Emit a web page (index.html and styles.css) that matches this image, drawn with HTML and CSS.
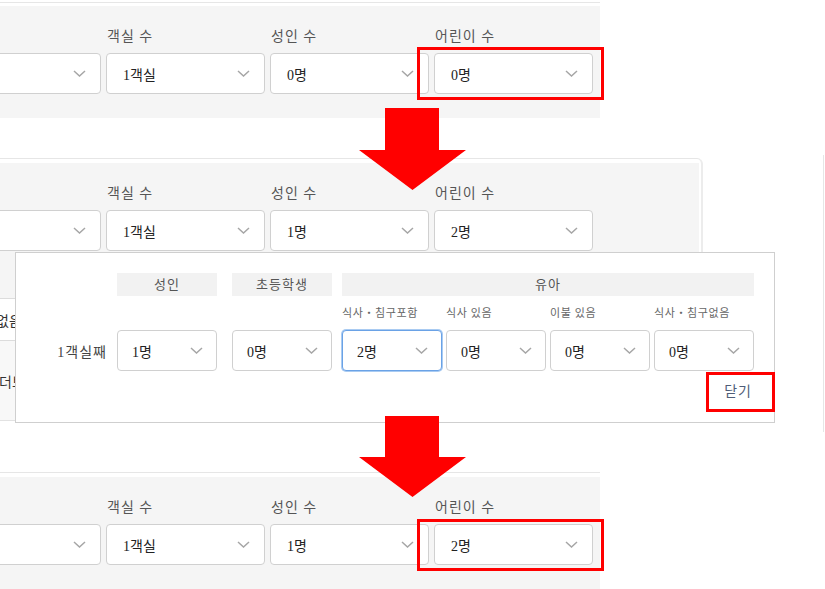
FILE: index.html
```html
<!DOCTYPE html>
<html lang="ko">
<head>
<meta charset="utf-8">
<title>객실 인원 선택</title>
<link rel="stylesheet" href="styles.css">
</head>
<body>
<div class="page">

  <section class="shot shot-top">
    <div class="rule"></div>
    <div class="panel">
      <div class="fields">
        <div class="field"><div class="flabel">&nbsp;</div><div class="sel"><span></span><svg class="chev" viewBox="0 0 13 7"><polyline points="1,1 6.5,6 12,1"/></svg></div></div>
        <div class="field"><div class="flabel">객실 수</div><div class="sel"><span>1객실</span><svg class="chev" viewBox="0 0 13 7"><polyline points="1,1 6.5,6 12,1"/></svg></div></div>
        <div class="field"><div class="flabel">성인 수</div><div class="sel"><span>0명</span><svg class="chev" viewBox="0 0 13 7"><polyline points="1,1 6.5,6 12,1"/></svg></div></div>
        <div class="field"><div class="flabel">어린이 수</div><div class="sel"><span>0명</span><svg class="chev" viewBox="0 0 13 7"><polyline points="1,1 6.5,6 12,1"/></svg></div></div>
      </div>
      <div class="mark mark-field"></div>
    </div>
  </section>

  <section class="shot shot-mid">
    <div class="frame">
      <div class="panel panel-mid">
        <div class="fields">
          <div class="field"><div class="flabel">&nbsp;</div><div class="sel"><span></span><svg class="chev" viewBox="0 0 13 7"><polyline points="1,1 6.5,6 12,1"/></svg></div></div>
          <div class="field"><div class="flabel">객실 수</div><div class="sel"><span>1객실</span><svg class="chev" viewBox="0 0 13 7"><polyline points="1,1 6.5,6 12,1"/></svg></div></div>
          <div class="field"><div class="flabel">성인 수</div><div class="sel"><span>1명</span><svg class="chev" viewBox="0 0 13 7"><polyline points="1,1 6.5,6 12,1"/></svg></div></div>
          <div class="field"><div class="flabel">어린이 수</div><div class="sel"><span>2명</span><svg class="chev" viewBox="0 0 13 7"><polyline points="1,1 6.5,6 12,1"/></svg></div></div>
        </div>
      </div>
    </div>
    <div class="rows">
      <div class="row row-a"><span class="cut">없음</span></div>
      <div class="row row-b"><span class="cut cut-b">더보기</span></div>
    </div>

    <div class="popup">
      <div class="prow phead">
        <div class="plabel"></div>
        <div class="pcol hcell">성인</div>
        <div class="pcol pcol-child hcell">초등학생</div>
        <div class="pgroup hcell">유아</div>
      </div>
      <div class="prow psub">
        <div class="plabel"></div>
        <div class="pcol"></div>
        <div class="pcol pcol-child"></div>
        <div class="pgroup pgroup-cols">
          <div class="scol">식사・침구포함</div>
          <div class="scol">식사 있음</div>
          <div class="scol">이불 있음</div>
          <div class="scol">식사・침구없음</div>
        </div>
      </div>
      <div class="prow psel">
        <div class="plabel">1객실째</div>
        <div class="pcol"><div class="sel psel-box"><span>1명</span><svg class="chev" viewBox="0 0 13 7"><polyline points="1,1 6.5,6 12,1"/></svg></div></div>
        <div class="pcol pcol-child"><div class="sel psel-box"><span>0명</span><svg class="chev" viewBox="0 0 13 7"><polyline points="1,1 6.5,6 12,1"/></svg></div></div>
        <div class="pgroup pgroup-cols">
          <div class="scol"><div class="sel psel-box is-focus"><span>2명</span><svg class="chev" viewBox="0 0 13 7"><polyline points="1,1 6.5,6 12,1"/></svg></div></div>
          <div class="scol"><div class="sel psel-box"><span>0명</span><svg class="chev" viewBox="0 0 13 7"><polyline points="1,1 6.5,6 12,1"/></svg></div></div>
          <div class="scol"><div class="sel psel-box"><span>0명</span><svg class="chev" viewBox="0 0 13 7"><polyline points="1,1 6.5,6 12,1"/></svg></div></div>
          <div class="scol"><div class="sel psel-box"><span>0명</span><svg class="chev" viewBox="0 0 13 7"><polyline points="1,1 6.5,6 12,1"/></svg></div></div>
        </div>
      </div>
      <div class="pclose"><span class="close-btn">닫기</span></div>
      <div class="mark mark-close"></div>
    </div>
  </section>

  <section class="shot shot-bottom">
    <div class="rule"></div>
    <div class="panel">
      <div class="fields">
        <div class="field"><div class="flabel">&nbsp;</div><div class="sel"><span></span><svg class="chev" viewBox="0 0 13 7"><polyline points="1,1 6.5,6 12,1"/></svg></div></div>
        <div class="field"><div class="flabel">객실 수</div><div class="sel"><span>1객실</span><svg class="chev" viewBox="0 0 13 7"><polyline points="1,1 6.5,6 12,1"/></svg></div></div>
        <div class="field"><div class="flabel">성인 수</div><div class="sel"><span>1명</span><svg class="chev" viewBox="0 0 13 7"><polyline points="1,1 6.5,6 12,1"/></svg></div></div>
        <div class="field"><div class="flabel">어린이 수</div><div class="sel"><span>2명</span><svg class="chev" viewBox="0 0 13 7"><polyline points="1,1 6.5,6 12,1"/></svg></div></div>
      </div>
      <div class="mark mark-field mark-bottom"></div>
    </div>
  </section>

  <svg class="arrow arrow-1" viewBox="0 0 107 82"><polygon points="26,0 80,0 80,42 107,42 53.5,82 0,42 26,42"/></svg>
  <svg class="arrow arrow-2" viewBox="0 0 107 81"><polygon points="26,0 80,0 80,41 107,41 53.5,81 0,41 26,41"/></svg>
</div>
</body>
</html>
```

FILE: styles.css
```css
html, body {
  margin: 0;
  padding: 0;
  background: #fff;
}

.page {
  position: relative;
  width: 825px;
  height: 589px;
  overflow: hidden;
  font-family: "Liberation Serif", "Noto Sans CJK KR", serif;
  color: #222;
}

.shot-top {
  padding-top: 2px;
}

.rule {
  width: 600px;
  height: 1px;
  background: #e6e6e6;
  margin-bottom: 3px;
}

.panel {
  position: relative;
  width: 600px;
  height: 112px;
  box-sizing: border-box;
  padding-top: 21px;
  background: #f5f5f5;
}

.fields {
  display: flex;
  gap: 5px;
  margin-left: -58px;
}

.field {
  width: 159px;
  flex: none;
}

.flabel {
  height: 20px;
  line-height: 20px;
  margin-bottom: 6px;
  padding-left: 1px;
  font-size: 14px;
  color: #555;
  letter-spacing: 1px;
  white-space: nowrap;
}

.sel {
  display: flex;
  align-items: center;
  justify-content: space-between;
  height: 41px;
  box-sizing: border-box;
  border: 1px solid #d0d0d0;
  border-radius: 4px;
  background: #fff;
  padding: 0 14px 0 16px;
  font-size: 14px;
  color: #222;
  white-space: nowrap;
}

.chev {
  width: 13px;
  height: 7px;
  flex: none;
}

.chev polyline {
  fill: none;
  stroke: #a6a6a6;
  stroke-width: 1.5;
}

/* red annotation boxes */
.mark {
  position: absolute;
  box-sizing: border-box;
  border: 3px solid #f00;
}

.mark-field {
  left: 417px;
  top: 41px;
  width: 187px;
  height: 53px;
}

.mark-bottom {
  top: 42px;
  height: 52px;
}

/* middle shot */
.shot-mid {
  position: relative;
  margin-top: 37px;
  width: 823px;
  padding-top: 3px;
  padding-bottom: 11px;
  border-right: 1px solid #e6e6e6;
}

.frame {
  width: 699px;
  border-top: 1px solid #e6e6e6;
  border-right: 2px solid #ececec;
  border-top-right-radius: 6px;
  padding: 4px 2px 0 0;
}

.panel-mid {
  width: 699px;
  height: 135px;
}

.rows {
  width: 703px;
}

.row {
  box-sizing: border-box;
  border-top: 1px solid #dcdcdc;
  font-size: 14px;
  color: #333;
  display: flex;
  align-items: center;
  white-space: nowrap;
  overflow: hidden;
}

.row-a {
  height: 42px;
  background: #fff;
}

.row-b {
  height: 81px;
  background: #f8f8f8;
  border-bottom: 1px solid #e2e2e2;
}

.cut {
  margin-left: -4px;
}

.cut-b {
  margin-left: -1px;
}

/* popup */
.popup {
  position: absolute;
  left: 15px;
  top: 97px;
  width: 760px;
  height: 171px;
  box-sizing: border-box;
  border: 1px solid #cfcfcf;
  background: #fff;
  padding: 20px 20px 0 0;
}

.prow {
  display: flex;
  align-items: center;
}

.plabel {
  width: 91px;
  margin-right: 10px;
  text-align: right;
  font-size: 14px;
  color: #444;
  letter-spacing: 1px;
  flex: none;
  white-space: nowrap;
}

.pcol {
  width: 100px;
  flex: none;
}

.pcol-child {
  margin-left: 15px;
}

.pgroup {
  width: 412px;
  margin-left: 10px;
  flex: none;
}

.pgroup-cols {
  display: flex;
  gap: 4px;
}

.scol {
  width: 100px;
  flex: none;
  white-space: nowrap;
}

.phead {
  height: 23px;
}

.hcell {
  height: 23px;
  line-height: 23px;
  background: #f2f2f2;
  text-align: center;
  font-size: 13px;
  color: #555;
  letter-spacing: 1px;
}

.psub {
  margin-top: 7px;
  height: 20px;
  line-height: 20px;
  font-size: 11px;
  color: #666;
  letter-spacing: 0.6px;
}

.psel {
  margin-top: 7px;
}

.psel-box {
  padding: 0 13px 0 14px;
}

.is-focus {
  border: 1px solid #6aa2e6;
  box-shadow: 0 0 0 1px #a9cbf2;
}

.pclose {
  margin-top: 10px;
  height: 22px;
  line-height: 22px;
  display: flex;
  justify-content: flex-end;
}

.close-btn {
  margin-right: 2px;
  font-size: 14px;
  color: #4f5d78;
  letter-spacing: 1px;
}

.mark-close {
  left: 690px;
  top: 119px;
  width: 69px;
  height: 40px;
}

/* bottom shot */
.shot-bottom {
  margin-top: 40px;
}

.shot-bottom .rule {
  margin-bottom: 4px;
}

/* arrows */
.arrow {
  position: absolute;
  left: 359px;
  width: 107px;
  fill: #ff0000;
}

.arrow-1 {
  top: 108px;
  height: 82px;
}

.arrow-2 {
  top: 416px;
  height: 81px;
}
```
